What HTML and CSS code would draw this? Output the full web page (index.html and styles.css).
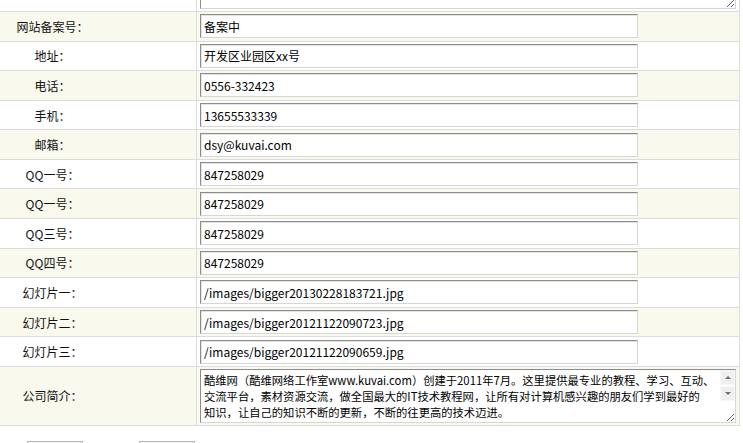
FILE: index.html
```html
<!DOCTYPE html>
<html lang="zh-CN">
<head>
  <meta charset="UTF-8" />
  <title>网站信息设置</title>
  <link rel="stylesheet" href="styles.css">
</head>
<body>

  <form class="edit-form" id="siteForm" autocomplete="off">
    <div class="form-row tall">
      <div class="form-label"></div>
      <div class="form-field"><textarea class="area" name="description">酷维网络工作室</textarea></div>
    </div>
    <div class="form-row">
      <div class="form-label">网站备案号：</div>
      <div class="form-field"><input class="text-input" type="text" name="icp" value="备案中"></div>
    </div>
    <div class="form-row">
      <div class="form-label">地址：</div>
      <div class="form-field"><input class="text-input" type="text" name="address" value="开发区业园区xx号"></div>
    </div>
    <div class="form-row">
      <div class="form-label">电话：</div>
      <div class="form-field"><input class="text-input" type="text" name="tel" value="0556-332423"></div>
    </div>
    <div class="form-row">
      <div class="form-label">手机：</div>
      <div class="form-field"><input class="text-input" type="text" name="mobile" value="13655533339"></div>
    </div>
    <div class="form-row">
      <div class="form-label">邮箱：</div>
      <div class="form-field"><input class="text-input" type="text" name="email" value="dsy@kuvai.com"></div>
    </div>
    <div class="form-row">
      <div class="form-label">QQ一号：</div>
      <div class="form-field"><input class="text-input" type="text" name="qq1" value="847258029"></div>
    </div>
    <div class="form-row">
      <div class="form-label">QQ一号：</div>
      <div class="form-field"><input class="text-input" type="text" name="qq2" value="847258029"></div>
    </div>
    <div class="form-row">
      <div class="form-label">QQ三号：</div>
      <div class="form-field"><input class="text-input" type="text" name="qq3" value="847258029"></div>
    </div>
    <div class="form-row">
      <div class="form-label">QQ四号：</div>
      <div class="form-field"><input class="text-input" type="text" name="qq4" value="847258029"></div>
    </div>
    <div class="form-row">
      <div class="form-label">幻灯片一：</div>
      <div class="form-field"><input class="text-input" type="text" name="slide1" value="/images/bigger20130228183721.jpg"></div>
    </div>
    <div class="form-row">
      <div class="form-label">幻灯片二：</div>
      <div class="form-field"><input class="text-input" type="text" name="slide2" value="/images/bigger20121122090723.jpg"></div>
    </div>
    <div class="form-row">
      <div class="form-label">幻灯片三：</div>
      <div class="form-field"><input class="text-input" type="text" name="slide3" value="/images/bigger20121122090659.jpg"></div>
    </div>
    <div class="form-row tall intro-row">
      <div class="form-label">公司简介：</div>
      <div class="form-field">
        <div class="area-wrap">
          <textarea class="area intro" name="intro" wrap="off">酷维网（酷维网络工作室www.kuvai.com）创建于2011年7月。这里提供最专业的教程、学习、互动、
交流平台，素材资源交流，做全国最大的IT技术教程网，让所有对计算机感兴趣的朋友们学到最好的
知识，让自己的知识不断的更新，不断的往更高的技术迈进。
酷维网是一个以IT教程为主的分享平台，我们的宗旨是：共同进步，共享知识。</textarea>
          <span class="scroll-rail" aria-hidden="true">
            <i class="scroll-btn up"></i>
            <i class="scroll-btn down"></i>
          </span>
        </div>
      </div>
    </div>
    <div class="form-btns">
      <button type="submit">提交</button>
      <button type="button">返回</button>
    </div>
  </form>

</body>
</html>
```

FILE: styles.css
```css
body {
  margin: 0;
  font-family: "Noto Sans CJK SC", sans-serif;
  font-size: 12px;
  color: #111;
  background: #fff;
  overflow: hidden;
}

/* page is shown scrolled a little, first row cut off */
.edit-form {
  width: 740px;
  margin-top: -48px;
}

.form-row {
  display: flex;
  box-sizing: border-box;
  height: 29.58px;
  border-bottom: 1px solid #dcdcdc;
}

.form-row.tall {
  height: 60px;
}

.form-row.intro-row {
  height: 59px;
}

.form-row:nth-child(even) {
  background: #f9f9ee;
}

.form-label {
  flex: none;
  box-sizing: border-box;
  width: 197px;
  padding-right: 91px;
  border-right: 1px solid #dcdcdc;
  display: flex;
  align-items: center;
  justify-content: center;
  white-space: nowrap;
}

.form-field {
  flex: 1;
  display: flex;
  align-items: center;
  padding-left: 3px;
  border-right: 1px solid #dcdcdc;
}

.text-input {
  box-sizing: border-box;
  width: 438px;
  height: 24px;
  padding: 0 3px;
  border: 1px solid;
  border-color: #8c8c8c #d6d6d6 #d6d6d6 #8c8c8c;
  box-shadow: inset 1px 1px 0 #e4e4e4;
  background: #fff;
  color: #000;
  font-family: "Noto Sans CJK SC", sans-serif;
  font-size: 12px;
  outline: none;
}

.area {
  box-sizing: border-box;
  width: 536px;
  height: 54px;
  margin: 0;
  padding: 2px 3px;
  border: 1px solid;
  border-color: #8c8c8c #d6d6d6 #d6d6d6 #8c8c8c;
  background: #fff;
  color: #000;
  font-family: "Noto Sans CJK SC", sans-serif;
  font-size: 11.3px;
  line-height: 16px;
  outline: none;
}

.area-wrap {
  position: relative;
  display: flex;
}

.intro {
  padding-right: 18px;
  overflow: hidden;
}

/* the scrollbar of the old browser, drawn over the textarea */
.scroll-rail {
  position: absolute;
  top: 1px;
  right: 1px;
  width: 15px;
  display: flex;
  flex-direction: column;
  gap: 1px;
  pointer-events: none;
}

.scroll-btn {
  box-sizing: border-box;
  height: 15px;
  background: #efefef;
  border: 1px solid #f8f8f8;
  display: flex;
  align-items: center;
  justify-content: center;
}

.scroll-btn::before {
  content: "";
  border-left: 3px solid transparent;
  border-right: 3px solid transparent;
}

.scroll-btn.up::before {
  border-bottom: 3px solid #6e6e6e;
}

.scroll-btn.down::before {
  border-top: 3px solid #6e6e6e;
}

.form-btns {
  display: flex;
  gap: 56px;
  padding: 15px 0 10px 27px;
}

.form-btns button {
  width: 56px;
  height: 22px;
  border: 1px solid #b8b8b8;
  background: #f3f3f3;
  font-family: "Noto Sans CJK SC", sans-serif;
  font-size: 12px;
  color: #222;
}
```
